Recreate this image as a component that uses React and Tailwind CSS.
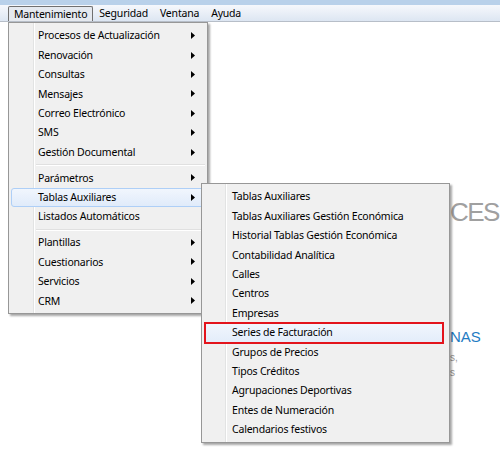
import React from "react";

function Arrow() {
  return (
    <svg width="4" height="7" viewBox="0 0 4 7" className="block">
      <path d="M0 0 L4 3.5 L0 7 Z" fill="#000" />
    </svg>
  );
}

function Item({ label, arrow, hi, boxed, textPad = "pl-[29px]" }) {
  return (
    <div className={"relative flex h-[19.4px] items-center " + textPad + " pr-[12px]"}>
      {hi && (
        <div className="absolute inset-x-[2px] inset-y-0 rounded-[3px] border border-[#aecff7] bg-gradient-to-b from-[#f1f6fd] to-[#e0ebfa]" />
      )}
      {boxed && (
        <div className="absolute left-[2px] right-[5px] top-[-1px] bottom-[-2px] border-2 border-[#e3141c] bg-gradient-to-b from-[#f1f6fd] to-[#e3edfa]" />
      )}
      <span className="relative flex-1 whitespace-nowrap">{label}</span>
      {arrow && (
        <span className="relative">
          <Arrow />
        </span>
      )}
    </div>
  );
}

function Sep() {
  return (
    <div className="flex h-[6.5px] items-center pl-[27px] pr-[2px]">
      <div className="h-[2px] w-full border-t border-b border-t-[#e0e0e0] border-b-white" />
    </div>
  );
}

export default function App() {
  const main1 = [
    "Procesos de Actualización",
    "Renovación",
    "Consultas",
    "Mensajes",
    "Correo Electrónico",
    "SMS",
    "Gestión Documental",
  ];
  const main3 = ["Plantillas", "Cuestionarios", "Servicios", "CRM"];
  const sub = [
    "Tablas Auxiliares",
    "Tablas Auxiliares Gestión Económica",
    "Historial Tablas Gestión Económica",
    "Contabilidad Analítica",
    "Calles",
    "Centros",
    "Empresas",
    "Series de Facturación",
    "Grupos de Precios",
    "Tipos Créditos",
    "Agrupaciones Deportivas",
    "Entes de Numeración",
    "Calendarios festivos",
  ];

  return (
    <div className="relative h-[455px] w-[500px] overflow-hidden bg-white font-['Segoe_UI','Noto_Sans',sans-serif] text-[10.5px] leading-none tracking-[-0.2px] text-black">
      {/* title strip */}
      <div className="h-[5px] bg-[#b9d1ea]" />
      {/* menubar */}
      <div className="flex h-[17px] items-end border-b border-[#b7bec8] bg-gradient-to-b from-[#f6f8fc] to-[#dde6f2] pl-[8px]">
        <div className="flex h-[15px] items-center rounded-t-[2px] border border-b-0 border-[#707070] bg-[#e5e9ef] px-[5px]">
          Mantenimiento
        </div>
        <div className="flex h-[15px] items-center px-[6px]">Seguridad</div>
        <div className="flex h-[15px] items-center px-[6px]">Ventana</div>
        <div className="flex h-[15px] items-center px-[6px]">Ayuda</div>
      </div>

      {/* background page content */}
      <div className="flex flex-col pl-[450px] pt-[177px] font-['Liberation_Sans',sans-serif] tracking-normal">
        <div className="text-[26px] leading-none tracking-[-1.5px] text-[#a0a0a0]">CES</div>
        <div className="mt-[104px] text-[15px] leading-none text-[#1f7cc3]">NAS</div>
        <div className="mt-[6px] text-[10px] leading-[15px] text-[#9a9a9a]">
          s,
          <br />s
        </div>
      </div>

      {/* main dropdown */}
      <div className="absolute left-[8px] top-[22px] w-[200px] border border-[#979797] bg-[#f0f0f0] py-[3px] shadow-[2px_2px_2px_rgba(0,0,0,0.35)]">
        <div className="absolute bottom-0 left-[24px] top-0 w-[2px] border-l border-[#e2e3e3] bg-white" />
        {main1.map((l) => (
          <Item key={l} label={l} arrow />
        ))}
        <Sep />
        <Item label="Parámetros" arrow />
        <Item label="Tablas Auxiliares" arrow hi />
        <Item label="Listados Automáticos" />
        <Sep />
        {main3.map((l) => (
          <Item key={l} label={l} arrow />
        ))}
      </div>

      {/* submenu */}
      <div className="absolute left-[201px] top-[183px] w-[249px] border border-[#979797] bg-[#f0f0f0] py-[3px] shadow-[2px_2px_2px_rgba(0,0,0,0.35)]">
        <div className="absolute bottom-0 left-[23px] top-0 w-[2px] border-l border-[#e2e3e3] bg-white" />
        {sub.map((l) => (
          <Item key={l} label={l} boxed={l === "Series de Facturación"} textPad="pl-[30px]" />
        ))}
      </div>
    </div>
  );
}
